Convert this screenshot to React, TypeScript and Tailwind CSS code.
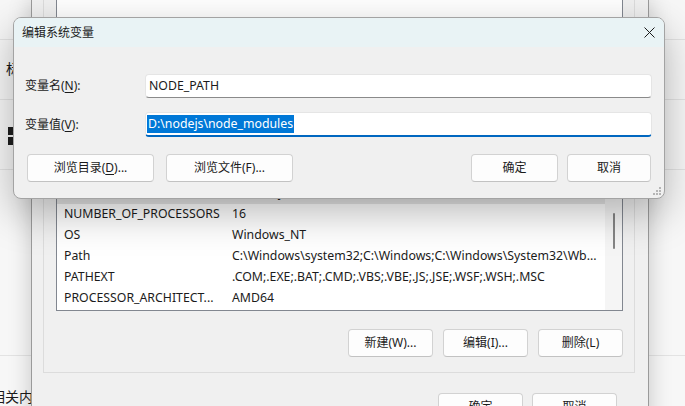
import React from "react";

const rows: [string, string][] = [
  ["NODE_PATH", "D:\\nodejs\\node_modules"],
  ["NUMBER_OF_PROCESSORS", "16"],
  ["OS", "Windows_NT"],
  ["Path", "C:\\Windows\\system32;C:\\Windows;C:\\Windows\\System32\\Wb..."],
  ["PATHEXT", ".COM;.EXE;.BAT;.CMD;.VBS;.VBE;.JS;.JSE;.WSF;.WSH;.MSC"],
  ["PROCESSOR_ARCHITECT...", "AMD64"],
];

const Btn = ({ children, className = "" }: { children: React.ReactNode; className?: string }) => (
  <div
    className={`h-[28px] flex items-center justify-center rounded-[4px] border border-[#d2d2d2] border-b-[#c2c2c2] bg-[#fdfdfd] text-[12px] ${className}`}
  >
    {children}
  </div>
);

const App = () => {
  return (
    <div className="relative w-[685px] h-[406px] overflow-hidden bg-[#f7f7f7] text-[12px] text-[#1b1b1b] font-['Noto_Sans','Noto_Sans_CJK_SC',sans-serif]">
      {/* settings page behind */}
      <div className="flex flex-col">
        <div className="h-[40px] border-b border-[#e3e3e3]" />
        <div className="h-[60px] border-b border-[#e3e3e3] pl-[6px] pt-[19px] text-[14px] leading-[20px]">标</div>
        <div className="h-[70px] border-b border-[#e3e3e3] pl-[8px] pt-[27px] flex flex-col gap-[2px]">
          <div className="w-[5px] h-[8px] bg-[#1f1f1f]" />
          <div className="w-[5px] h-[8px] bg-[#1f1f1f]" />
        </div>
        <div className="h-[186px] border-b border-[#e3e3e3]" />
        <div className="pt-[31px] ml-[-9px] text-[14px] leading-[20px]">相关内容</div>
      </div>

      {/* environment variables window */}
      <div className="absolute left-[31px] top-0 w-[618px] h-[440px] bg-[#f0f0f0] border-x border-[#9a9a9a] shadow-[0_0_22px_rgba(0,0,0,0.2)]">
        <div className="ml-[11px] w-[592px] h-[110px] border-x border-b border-[#dcdcdc] pl-[12px]">
          <div className="w-[567px] h-[90px] bg-white border-x border-b border-[#828790]" />
        </div>
        <div className="ml-[11px] mt-[30px] w-[592px] border border-[#dcdcdc] pl-[12px] pt-[20px] pb-[15px]">
          <div className="w-[567px] h-[150px] bg-white border border-[#828790] flex overflow-hidden">
            <div className="flex-1 flex flex-col pt-[21px] text-[12.3px]">
              {rows.map(([k, v]) => (
                <div
                  key={k}
                  className={`h-[21px] shrink-0 flex items-center whitespace-nowrap ${k === "NODE_PATH" ? "bg-[#e5e5e5]" : ""}`}
                >
                  <span className="w-[175px] pl-[7px]">{k}</span>
                  <span>{v}</span>
                </div>
              ))}
            </div>
            <div className="w-[17px] bg-[#f5f5f5] flex justify-center pt-[51px] pl-[1px]">
              <div className="w-[2px] h-[36px] rounded-full bg-[#858585]" />
            </div>
          </div>
          <div className="mt-[18px] w-[567px] flex justify-end gap-[10px]">
            <Btn className="w-[85px]">新建(W)...</Btn>
            <Btn className="w-[85px]">编辑(I)...</Btn>
            <Btn className="w-[85px]">删除(L)</Btn>
          </div>
        </div>
        <div className="mt-[20px] mr-[31px] flex justify-end gap-[9px]">
          <Btn className="w-[85px]">确定</Btn>
          <Btn className="w-[85px]">取消</Btn>
        </div>
      </div>

      {/* edit system variable dialog */}
      <div className="absolute left-[13px] top-[17px] w-[652px] h-[182px] rounded-[8px] border border-[#a3a3a3] bg-[#f0f0f0] shadow-[0_14px_40px_rgba(0,0,0,0.28)] overflow-hidden flex flex-col">
        <div className="h-[29px] shrink-0 bg-[#e9f3f5] flex items-center justify-between pl-[8px] pr-[9px]">
          <span>编辑系统变量</span>
          <svg width="11" height="11" viewBox="0 0 11 11">
            <path d="M0.5 0.5 L10.5 10.5 M10.5 0.5 L0.5 10.5" stroke="#1b1b1b" strokeWidth="1" />
          </svg>
        </div>
        <div className="relative flex-1 pt-[27px] pl-[11px] pr-[12px] flex flex-col">
          <div className="flex items-center h-[24px]">
            <span className="w-[120px]">
              变量名(<span className="underline underline-offset-2">N</span>):
            </span>
            <div className="flex-1 h-[24px] bg-white border border-[#e5e5e5] border-b-[#8a8a8a] rounded-[4px] pl-[3px] flex items-center text-[12.3px]">
              NODE_PATH
            </div>
          </div>
          <div className="flex items-center h-[25px] mt-[14px]">
            <span className="w-[120px]">
              变量值(<span className="underline underline-offset-2">V</span>):
            </span>
            <div className="flex-1 h-[25px] bg-white border border-[#e5e5e5] border-b-2 border-b-[#0067c0] rounded-[4px] pl-[1px] flex items-center text-[12.3px]">
              <span className="bg-[#0078d7] text-white px-[1px] leading-[18px]">D:\nodejs\node_modules</span>
            </div>
          </div>
          <div className="flex mt-[17px] ml-[2px]">
            <Btn className="w-[127px]">
              浏览目录(<span className="underline underline-offset-2">D</span>)...
            </Btn>
            <Btn className="w-[127px] ml-[12px]">浏览文件(F)...</Btn>
            <Btn className="w-[87px] ml-auto border-[#0067c0] border-b-[#0067c0]">确定</Btn>
            <Btn className="w-[84px] ml-[9px] mr-[1px]">取消</Btn>
          </div>
          <svg className="absolute right-[3px] bottom-[3px]" width="8" height="8" viewBox="0 0 8 8">
            <rect x="6" y="0" width="2" height="2" fill="#b5b5b5" />
            <rect x="3" y="3" width="2" height="2" fill="#b5b5b5" />
            <rect x="6" y="3" width="2" height="2" fill="#b5b5b5" />
            <rect x="0" y="6" width="2" height="2" fill="#b5b5b5" />
            <rect x="3" y="6" width="2" height="2" fill="#b5b5b5" />
            <rect x="6" y="6" width="2" height="2" fill="#b5b5b5" />
          </svg>
        </div>
      </div>
    </div>
  );
};

export default App;
